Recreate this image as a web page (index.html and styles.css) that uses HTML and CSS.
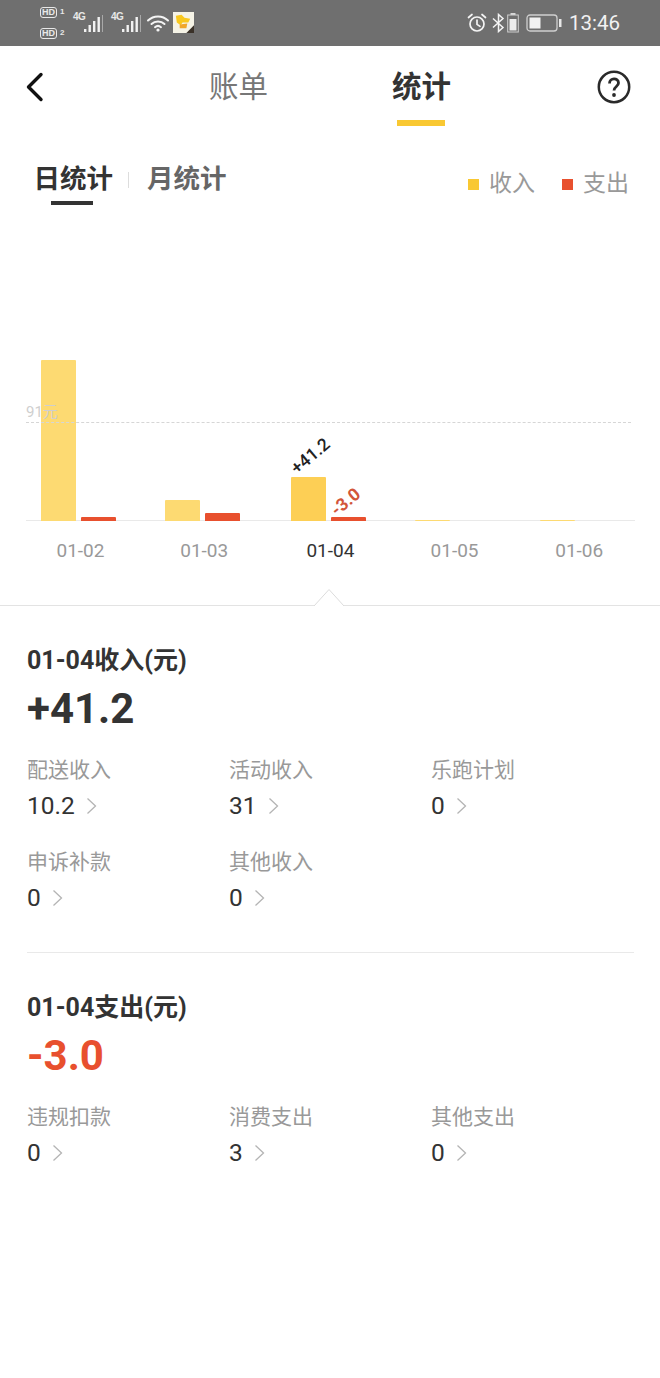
FILE: index.html
```html
<!DOCTYPE html>
<html lang="zh">
<head>
<meta charset="utf-8">
<title>统计</title>
<link rel="stylesheet" href="styles.css">
</head>
<body>
<div class="page">
  <div class="status">
    <div class="status-left">
      <div class="hd-stack">
        <div class="hd"><span class="hd-box">HD</span><span class="hd-num">1</span></div>
        <div class="hd"><span class="hd-box">HD</span><span class="hd-num">2</span></div>
      </div>
      <div class="sig"><span class="sig-t">4G</span>
        <svg class="sig-bars" width="22" height="20" viewBox="0 0 22 20"><g fill="#f2f2f2"><rect x="0" y="15" width="2.4" height="3"/><rect x="4.5" y="11" width="2.4" height="7"/><rect x="9" y="7" width="2.4" height="11"/><rect x="13.5" y="3" width="2.4" height="15"/></g><rect x="18" y="1" width="1" height="17" fill="#a8a8a8"/></svg>
      </div>
      <div class="sig"><span class="sig-t">4G</span>
        <svg class="sig-bars" width="22" height="20" viewBox="0 0 22 20"><g fill="#f2f2f2"><rect x="0" y="15" width="2.4" height="3"/><rect x="4.5" y="11" width="2.4" height="7"/><rect x="9" y="7" width="2.4" height="11"/><rect x="13.5" y="3" width="2.4" height="15"/></g><rect x="18" y="1" width="1" height="17" fill="#a8a8a8"/></svg>
      </div>
      <svg class="wifi" width="24" height="20" viewBox="0 0 24 20" fill="none" stroke="#f4f4f4" stroke-width="2" stroke-linecap="round"><path d="M2 7.5C7.5 2 16.5 2 22 7.5"/><path d="M5.5 11C9 7.5 15 7.5 18.5 11"/><path d="M9 14.2C10.8 12.6 13.2 12.6 15 14.2"/><circle cx="12" cy="17" r="1.6" fill="#f4f4f4" stroke="none"/></svg>
      <svg class="thumb" width="21" height="21" viewBox="0 0 22 22"><rect width="22" height="22" fill="#f5f3e6"/><path d="M3 4L9 3L12 6L18 7L16 11L10 11L8 14L4 11Z" fill="#f8c81e"/><path d="M7 13L15 12L14 17L7 17Z" fill="#f0a72a"/><path d="M14 22L22 14V22Z" fill="#3a3128"/></svg>
    </div>
    <div class="status-right">
      <svg width="22" height="22" viewBox="0 0 22 22" fill="none" stroke="#f4f4f4" stroke-width="1.7" stroke-linecap="round"><circle cx="11" cy="12" r="7"/><path d="M11 8v4.4l3 2"/><path d="M2.5 5.5L6 2.5M19.5 5.5L16 2.5"/></svg>
      <svg class="bt" width="13" height="20" viewBox="0 0 13 20" fill="none" stroke="#f4f4f4" stroke-width="1.5"><path d="M1 5.5L11 14.5L6.5 18.500V1.500L11 5.500L1 14.500"/></svg>
      <svg class="mini-bat" width="12" height="20" viewBox="0 0 12 20"><rect x="3.500" y="0" width="5" height="2" fill="#d8d8d8"/><rect x="0.700" y="2" width="10.600" height="17" fill="none" stroke="#cfcfcf" stroke-width="1"/><rect x="2.500" y="6" width="7" height="11.500" fill="#ececec"/></svg>
      <svg class="bat" width="36" height="18" viewBox="0 0 36 18"><rect x="1" y="1" width="30" height="16" rx="3" fill="none" stroke="#cfcfcf" stroke-width="1.300"/><rect x="3.500" y="3.500" width="11" height="11" fill="#f1f1f1"/><rect x="33" y="5" width="2.500" height="8" fill="#e8e8e8"/></svg>
      <span class="clock">13:46</span>
    </div>
  </div>

  <header class="nav">
    <svg class="back" width="20" height="30" viewBox="0 0 20 30" fill="none" stroke="#111" stroke-width="3.400" stroke-linecap="round" stroke-linejoin="round"><path d="M16 2.500L3.500 15L16 27.500"/></svg>
    <div class="nav-tabs">
      <span class="nav-tab">账单</span>
      <span class="nav-tab nav-tab-on">统计</span>
    </div>
    <svg class="help" width="34" height="34" viewBox="0 0 34 34" fill="none"><circle cx="17" cy="17" r="15.200" stroke="#2a2a2a" stroke-width="2.500"/><path d="M12.500 13.500C12.500 7.500 21.500 7.500 21.500 13C21.500 16.500 17 16.500 17 20.500" stroke="#2a2a2a" stroke-width="2.800"/><circle cx="17" cy="25" r="1.900" fill="#2a2a2a"/></svg>
  </header>

  <div class="filter">
    <div class="periods">
      <span class="period period-on">日统计</span>
      <span class="period-sep"></span>
      <span class="period">月统计</span>
    </div>
    <div class="legend">
      <span class="swatch swatch-in"></span><span class="legend-text">收入</span>
      <span class="swatch swatch-out"></span><span class="legend-text">支出</span>
    </div>
  </div>

  <div class="chart">
    <span class="avg-label">91元</span>
    <span class="avg-line"></span>
    <div class="plot">
      <div class="day day-1">
        <div class="bars"><span class="bar bar-in" style="height:161px"></span><span class="bar bar-out" style="height:4px"></span></div>
        <span class="day-label">01-02</span>
      </div>
      <div class="day day-2">
        <div class="bars"><span class="bar bar-in" style="height:21px"></span><span class="bar bar-out" style="height:8px"></span></div>
        <span class="day-label">01-03</span>
      </div>
      <div class="day day-3">
        <div class="bars">
          <span class="bar bar-in bar-sel" style="height:44px"><span class="bar-val val-in">+41.2</span></span>
          <span class="bar bar-out" style="height:4px"><span class="bar-val val-out">-3.0</span></span>
        </div>
        <span class="day-label day-label-on">01-04</span>
      </div>
      <div class="day day-4">
        <div class="bars"><span class="bar bar-in" style="height:1px"></span><span class="bar bar-none"></span></div>
        <span class="day-label">01-05</span>
      </div>
      <div class="day day-5">
        <div class="bars"><span class="bar bar-in" style="height:1px"></span><span class="bar bar-none"></span></div>
        <span class="day-label">01-06</span>
      </div>
    </div>
  </div>

  <div class="rule-wrap">
    <svg class="caret" width="32" height="18" viewBox="0 0 32 18"><path d="M1 18L16 1.500L31 18" fill="#fff" stroke="#dcdcdc" stroke-width="1"/></svg>
  </div>

  <section class="block block-in">
    <h2 class="block-title">01-04收入(元)</h2>
    <div class="block-total">+41.2</div>
    <div class="items">
      <div class="item"><div class="item-name">配送收入</div><div class="item-val">10.2<svg class="chev" width="11" height="18" viewBox="0 0 11 18" fill="none" stroke="#b4b4b4" stroke-width="1.300"><path d="M1.500 1.500L9.500 9L1.500 16.500"/></svg></div></div>
      <div class="item"><div class="item-name">活动收入</div><div class="item-val">31<svg class="chev" width="11" height="18" viewBox="0 0 11 18" fill="none" stroke="#b4b4b4" stroke-width="1.300"><path d="M1.500 1.500L9.500 9L1.500 16.500"/></svg></div></div>
      <div class="item"><div class="item-name">乐跑计划</div><div class="item-val">0<svg class="chev" width="11" height="18" viewBox="0 0 11 18" fill="none" stroke="#b4b4b4" stroke-width="1.300"><path d="M1.500 1.500L9.500 9L1.500 16.500"/></svg></div></div>
      <div class="item"><div class="item-name">申诉补款</div><div class="item-val">0<svg class="chev" width="11" height="18" viewBox="0 0 11 18" fill="none" stroke="#b4b4b4" stroke-width="1.300"><path d="M1.500 1.500L9.500 9L1.500 16.500"/></svg></div></div>
      <div class="item"><div class="item-name">其他收入</div><div class="item-val">0<svg class="chev" width="11" height="18" viewBox="0 0 11 18" fill="none" stroke="#b4b4b4" stroke-width="1.300"><path d="M1.500 1.500L9.500 9L1.500 16.500"/></svg></div></div>
    </div>
  </section>

  <section class="block block-out">
    <h2 class="block-title">01-04支出(元)</h2>
    <div class="block-total total-out">-3.0</div>
    <div class="items">
      <div class="item"><div class="item-name">违规扣款</div><div class="item-val">0<svg class="chev" width="11" height="18" viewBox="0 0 11 18" fill="none" stroke="#b4b4b4" stroke-width="1.300"><path d="M1.500 1.500L9.500 9L1.500 16.500"/></svg></div></div>
      <div class="item"><div class="item-name">消费支出</div><div class="item-val">3<svg class="chev" width="11" height="18" viewBox="0 0 11 18" fill="none" stroke="#b4b4b4" stroke-width="1.300"><path d="M1.500 1.500L9.500 9L1.500 16.500"/></svg></div></div>
      <div class="item"><div class="item-name">其他支出</div><div class="item-val">0<svg class="chev" width="11" height="18" viewBox="0 0 11 18" fill="none" stroke="#b4b4b4" stroke-width="1.300"><path d="M1.500 1.500L9.500 9L1.500 16.500"/></svg></div></div>
    </div>
  </section>
</div>
</body>
</html>
```
FILE: styles.css
```css
* { box-sizing: border-box; }
html, body { margin: 0; padding: 0; background: #fff; }
body { font-family: Roboto, "Noto Sans CJK SC", sans-serif; color: #333; overflow: hidden; }
.page { width: 660px; height: 1378px; overflow: hidden; }

/* status bar */
.status { height: 46px; background: #6f6f6f; display: flex; justify-content: space-between; align-items: center; padding: 0 40px 0 40px; color: #f4f4f4; }
.status-left, .status-right { display: flex; align-items: center; }
.hd-stack { display: flex; flex-direction: column; gap: 10px; width: 28px; margin-top: -1px; }
.hd { display: flex; align-items: center; gap: 3px; height: 11px; }
.hd-box { font: 700 9px/9px "Liberation Sans", sans-serif; border: 1px solid #e8e8e8; color: #e8e8e8; border-radius: 3px; height: 11px; width: 17px; text-align: center; flex: none; }
.hd-num { font: 700 8px/10px "Liberation Sans", sans-serif; color: #e8e8e8; }
.sig { display: flex; align-items: flex-start; margin-left: 5px; width: 33px; height: 22px; }
.sig + .sig { margin-left: 5px; }
.sig-t { font: 700 10px/10px "Liberation Sans", sans-serif; color: #e8e8e8; width: 11px; flex: none; letter-spacing: -0.500px; }
.sig-bars { margin-top: 2px; }
.wifi { margin-left: 2px; }
.thumb { margin-left: 3px; margin-top: -1px; }
.status-right svg { flex: none; }
.status-right .bt { margin-left: 4px; }
.status-right .mini-bat { margin-left: 2px; }
.status-right .bat { margin-left: 7px; }
.clock { font: 400 20.500px/24px Roboto, sans-serif; margin-left: 7px; color: #f2f2f2; }

/* nav */
.nav { height: 84px; display: flex; align-items: flex-start; position: relative; padding: 26px 27px 0 25px; justify-content: space-between; }
.nav-tabs { display: flex; gap: 124px; position: absolute; left: 209px; top: 20px; }
.nav-tab { font-size: 29.500px; line-height: 42px; color: #777; display: block; padding-bottom: 18px; position: relative; }
.nav-tab-on { color: #333; font-weight: 700; }
.nav-tab-on::after { content: ""; position: absolute; left: 5px; width: 48px; bottom: 0; height: 6px; background: #f9c832; }
.help { margin-top: -2px; margin-right: 2px; }

/* filter */
.filter { display: flex; justify-content: space-between; padding: 30px 31px 0 33.500px; height: 96px; }
.periods { display: flex; align-items: flex-start; }
.period { font-size: 26.500px; line-height: 38px; font-weight: 700; color: #666; display: block; position: relative; }
.period-on { color: #333; }
.period-on::after { content: ""; position: absolute; left: 17.500px; width: 42px; height: 3.500px; top: 41px; background: #333; }
.period-sep { width: 1px; height: 16px; background: #ddd; margin: 12px 18px 0 15px; }
.legend { display: flex; align-items: center; height: 42px; margin-top: 3px; }
.swatch { width: 11px; height: 11px; margin-right: 10px; }
.swatch-in { background: #f9c832; }
.swatch-out { background: #e8502e; margin-left: 27px; }
.legend-text { font-size: 23px; color: #999; line-height: 30px; }

/* chart */
.chart { position: relative; height: 379px; }
.avg-label { position: absolute; left: 26px; top: 176px; font-size: 15px; line-height: 20px; color: #cfcfcf; z-index: 2; }
.avg-line { position: absolute; left: 26px; right: 29px; top: 196px; border-top: 1px dashed #d6d6d6; z-index: 2; }
.plot { position: absolute; left: 26px; right: 25px; top: 0; height: 339px; display: grid; grid-template-columns: 124.700px 124.700px 124.700px 124.700px 110px; }
.plot::before { content: ""; position: absolute; left: 0; right: 0; top: 294px; height: 1px; background: #e9e9e9; }
.day { display: flex; flex-direction: column; align-items: flex-start; padding-left: 15px; position: relative; }
.day-2 { padding-left: 14px; }
.day-3 { padding-left: 15.500px; }
.bars { height: 295px; display: flex; align-items: flex-end; gap: 5px; position: relative; }
.bar { width: 35px; display: block; border-radius: 1px 1px 0 0; position: relative; }
.bar-in { background: #fdda72; }
.bar-sel { background: #fdcf55; }
.bar-out { background: #e8502e; }
.bar-none { height: 0; }
.bar-val { position: absolute; white-space: nowrap; transform: rotate(-40deg); transform-origin: left bottom; font-size: 17.500px; line-height: 18px; font-weight: 500; }
.val-in { left: 8px; bottom: 100%; color: #222; }
.val-out { left: 8px; bottom: calc(100% - 2px); color: #d2553a; font-weight: 700; }
.day-label { font-size: 19px; line-height: 24px; color: #999; width: 75px; text-align: center; margin-top: 18px; margin-left: 2px; }
.day-label-on { color: #333; }

/* divider */
.rule-wrap { height: 1px; background: #e3e3e3; position: relative; }
.caret { position: absolute; left: 313px; top: -17px; }

/* blocks */
.block { padding: 0 27px; }
.block-in { padding-top: 38px; height: 346px; }
.block-out { padding-top: 39px; position: relative; }
.block-out::before { content: ""; position: absolute; left: 27px; right: 26px; top: 0; height: 1px; background: #e9e9e9; }
.block-title { margin: 0; font-size: 25px; line-height: 34px; font-weight: 700; color: #333; }
.block-total { font-size: 42px; line-height: 50px; font-weight: 700; color: #333; margin-top: 6px; }
.total-out { color: #e8502e; }
.items { display: grid; grid-template-columns: 202px 202px 202px; row-gap: 24px; margin-top: 21px; }
.item-name { font-size: 21px; line-height: 30px; color: #999; }
.item-val { font-size: 24.500px; line-height: 34px; color: #333; display: flex; align-items: center; margin-top: 4px; }
.chev { margin-left: 11px; }
```
